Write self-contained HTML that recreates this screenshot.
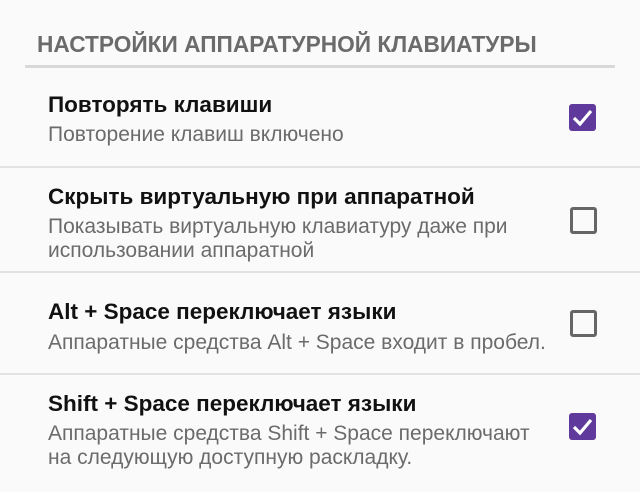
<!DOCTYPE html>
<html><head><meta charset="utf-8"><style>
body{margin:0;width:640px;height:492px;background:#fafafa;font-family:"Liberation Sans",sans-serif;position:relative;overflow:hidden}
.a{position:absolute;white-space:nowrap}
.h{left:37px;top:31px;font-size:22.7px;font-weight:bold;color:#6b6b6b}
.t{left:48px;font-size:22.5px;font-weight:bold;color:#111}
.s{left:48px;font-size:21px;color:#6b6b6b;line-height:24px}
.d{position:absolute;left:0;width:640px;height:2px;background:#e2e2e2}
.cb{position:absolute;left:570px;width:21px;height:21px;border:3px solid #666;border-radius:3px}
.ck{position:absolute;left:569px;width:27px;height:27px;background:#5f3a9c;border-radius:3px}
</style></head><body>
<div class="a h">НАСТРОЙКИ АППАРАТУРНОЙ КЛАВИАТУРЫ</div>
<div style="position:absolute;left:25px;top:65px;width:590px;height:3px;background:#d8d8d8"></div>

<div class="a t" style="top:92px">Повторять клавиши</div>
<div class="a s" style="top:123px">Повторение клавиш включено</div>
<div class="ck" style="top:104px"><svg width="27" height="27"><path d="M5 14 L11 20 L22 7" stroke="#fff" stroke-width="3.2" fill="none"/></svg></div>
<div class="d" style="top:166px"></div>

<div class="a t" style="top:184px">Скрыть виртуальную при аппаратной</div>
<div class="a s" style="top:215px">Показывать виртуальную клавиатуру даже при<br>использовании аппаратной</div>
<div class="cb" style="top:207px"></div>
<div class="d" style="top:271px"></div>

<div class="a t" style="top:299px">Alt + Space переключает языки</div>
<div class="a s" style="top:331px">Аппаратные средства Alt + Space входит в пробел.</div>
<div class="cb" style="top:310px"></div>
<div class="d" style="top:373px"></div>

<div class="a t" style="top:391px">Shift + Space переключает языки</div>
<div class="a s" style="top:422px">Аппаратные средства Shift + Space переключают<br>на следующую доступную раскладку.</div>
<div class="ck" style="top:413px"><svg width="27" height="27"><path d="M5 14 L11 20 L22 7" stroke="#fff" stroke-width="3.2" fill="none"/></svg></div>
</body></html>
